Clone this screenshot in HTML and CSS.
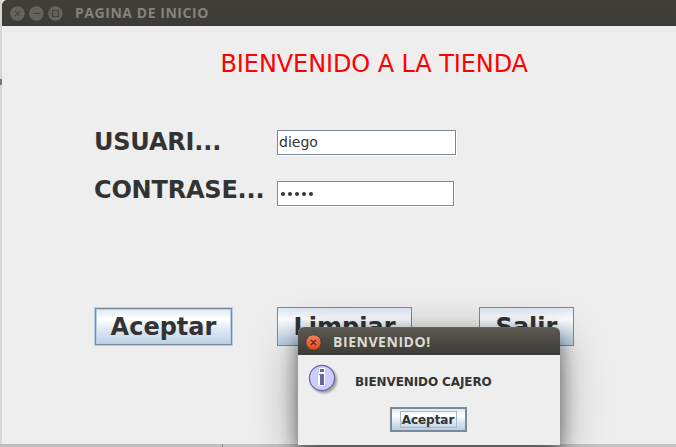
FILE: index.html
```html
<!DOCTYPE html>
<html lang="es">
<head>
<meta charset="utf-8">
<title>PAGINA DE INICIO</title>
<link rel="stylesheet" href="styles.css">
</head>
<body>
<main class="window">
  <header class="titlebar">
    <svg class="controls" width="56" height="17" viewBox="0 0 56 17" fill="none" stroke="#42413c" stroke-width="1.1">
      <g fill="#65635d" stroke="#383731" stroke-width=".7"><circle cx="8.4" cy="8.5" r="7.7"/><circle cx="27.4" cy="8.5" r="7.7"/><circle cx="46.4" cy="8.5" r="7.7"/></g>
      <path d="M5.8 5.9l5.2 5.2M11 5.9l-5.2 5.2M24 8.5h7M43.4 5.5h6v6h-6z"/>
    </svg>
    <span class="title">PAGINA DE INICIO</span>
  </header>
  <h1 class="heading">BIENVENIDO A LA TIENDA</h1>
  <section class="form">
    <span class="label">USUARI...</span>
    <div class="field user">diego</div>
    <span class="label">CONTRASE...</span>
    <div class="field password"><i></i><i></i><i></i><i></i><i></i></div>
  </section>
  <nav class="actions">
    <button class="button primary">Aceptar</button>
    <button class="button clear">Limpiar</button>
    <button class="button exit">Salir</button>
  </nav>
</main>
<section class="dialog">
  <header class="dialog-bar">
    <svg width="17" height="17" viewBox="0 0 17 17">
      <defs><linearGradient id="close" x2="0" y2="1"><stop stop-color="#f58460"/><stop offset="1" stop-color="#dc491b"/></linearGradient></defs>
      <circle cx="8.5" cy="8.5" r="7.7" fill="url(#close)" stroke="#393730" stroke-width=".8"/>
      <path d="M5.9 5.9l5.2 5.2M11.1 5.9l-5.2 5.2" stroke="#49271b" stroke-width="1.2"/>
    </svg>
    <span class="title">BIENVENIDO!</span>
  </header>
  <div class="message">
    <svg class="info" width="32" height="32" viewBox="0 0 32 32">
      <circle cx="14" cy="14" r="12.6" fill="#ccccff" stroke="#666699" stroke-width="1.2"/>
      <path d="M11 4h6v5h-6zM10 9h7v13h-7z" fill="#fff"/>
      <path d="M12 5h4v3h-4zM11 10h5v11h-4v-10h-1z" fill="#666699"/>
    </svg>
    <span>BIENVENIDO CAJERO</span>
  </div>
  <button class="confirm"><span>Aceptar</span></button>
</section>
<span class="edge-mark"></span>
<span class="bottom-mark"></span>
</body>
</html>
```
FILE: styles.css
```css
* { box-sizing: border-box; }
body {
  margin: 0;
  width: 676px;
  height: 447px;
  padding-left: 2px;
  overflow: hidden;
  position: relative;
  background: linear-gradient(#b9b9b9, #c3c3c3) 0 444px / 223px 3px no-repeat,
    linear-gradient(#c5c5c5, #c5c5c5) 223px 444px no-repeat,
    #d6d6d6;
  font-family: "DejaVu Sans", sans-serif;
  color: #333;
}
.window { height: 444px; background: #eee; }
.titlebar {
  height: 26px;
  display: flex;
  align-items: center;
  padding-left: 7px;
  background: linear-gradient(#413f3a, #3c3b37);
  border-radius: 5px 0 0 0;
}
.title {
  font: bold 14px/18px "Open Sans", sans-serif;
  white-space: nowrap;
}
.titlebar .title { margin-left: 10px; color: #85827b; letter-spacing: .55px; }
.heading {
  margin: 24px 0 0 218.5px;
  font-weight: 400;
  font-size: 24px;
  line-height: 28px;
  letter-spacing: -.1px;
  color: #f00;
  white-space: nowrap;
}
.form {
  display: grid;
  grid-template-columns: 183px 180px;
  grid-template-rows: 26px 26px;
  row-gap: 25px;
  margin: 52px 0 0 92px;
}
.label { font-weight: bold; font-size: 24px; line-height: 24px; letter-spacing: -.2px; white-space: nowrap; }
.label:nth-of-type(2) { line-height: 18px; }
.field {
  height: 25px;
  border: 1px solid #7a8a99;
  box-shadow: 1px 1px #fff;
  background: #fff;
  font-size: 14px;
  line-height: 23px;
  padding-left: 1px;
}
.user { width: 179px; }
.password { width: 177px; display: flex; align-items: center; gap: 3px; padding-left: 2.5px; }
.password i { width: 4px; height: 4px; border-radius: 2px; background: #333; }
.actions { display: flex; height: 39px; margin: 100px 0 0 92px; }
.button {
  height: 39px;
  border: 1px solid #7a8a99;
  padding: 0;
  font: bold 24px/36px "DejaVu Sans", sans-serif;
  color: #333;
  background: linear-gradient(#dde8f3, #fff 30%, #dde8f3 60%, #b8cfe5);
}
.primary { width: 139px; border-color: #b8cfe5; box-shadow: inset 0 0 0 1px #7a8a99, inset 0 0 0 2px #b8cfe5; }
.clear { width: 135px; margin-left: 44px; }
.exit { width: 95px; margin-left: 67px; }
.dialog {
  position: absolute;
  left: 298px;
  top: 327px;
  width: 262px;
  height: 118px;
  background: #eee;
  border-radius: 6px 6px 0 0;
  box-shadow: 0 10px 18px rgba(0,0,0,.48), 0 12px 48px rgba(0,0,0,.34);
}
.dialog-bar {
  height: 28px;
  padding: 1px 0 0 7px;
  display: flex;
  align-items: center;
  background: linear-gradient(#5b584f, #3c3b37);
  border-top: 1px solid #65625a;
  border-radius: 6px 6px 0 0;
}
.dialog-bar .title { margin-left: 11px; color: #dfdbd2; letter-spacing: .55px; }
.message { display: flex; height: 52px; padding: 9px 0 0 10px; }
.message span { margin-left: 15px; font-size: 12px; font-weight: bold; line-height: 36px; letter-spacing: -.1px; white-space: nowrap; }
.info { filter: drop-shadow(2px 2px 1px rgba(0,0,0,.32)); }
.confirm {
  display: block;
  width: 77px;
  height: 25px;
  margin-left: 92px;
  padding: 2px 8px;
  border: 2px solid #7a8a99;
  background: linear-gradient(#dde8f3, #fff 30%, #dde8f3 60%, #b8cfe5);
}
.confirm span {
  display: block;
  height: 17px;
  border: 1px solid #a3b8cc;
  font: bold 12px/16px "DejaVu Sans", sans-serif;
  text-indent: -1px;
  letter-spacing: -.05px;
  color: #333;
}
.edge-mark { position: absolute; left: 0; top: 79px; width: 2px; height: 6px; background: #777; }
.bottom-mark { position: absolute; left: 222px; top: 444px; width: 1px; height: 3px; background: #8d8d8d; }
```
